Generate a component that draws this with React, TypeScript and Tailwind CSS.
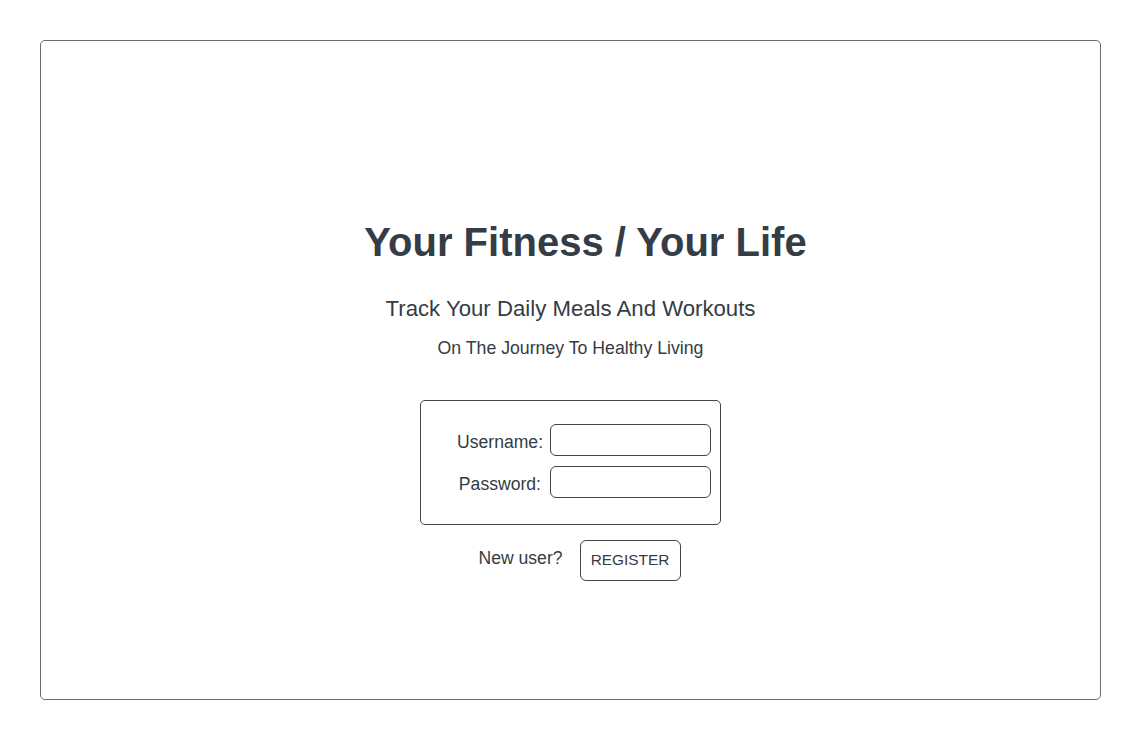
import { useState } from 'react';

function App() {
  const [username, setUsername] = useState('');
  const [password, setPassword] = useState('');

  return (
    <div className="min-h-screen bg-white p-10 font-['Liberation_Sans',Arial,sans-serif] text-[#343c45]">
      {/* Main frame */}
      <div className="h-[660px] w-[1061px] rounded-[5px] border border-[#6b6b6b] flex flex-col items-center pt-[181px]">
        <h1 className="ml-[30px] text-[40px] leading-none font-bold">Your Fitness / Your Life</h1>
        <h2 className="mt-[36px] text-[22.2px] leading-none">Track Your Daily Meals And Workouts</h2>
        <p className="mt-[20px] text-[17.7px] leading-none">On The Journey To Healthy Living</p>

        {/* Login box */}
        <form
          className="mt-[42px] w-[301px] h-[125px] rounded-[5px] border border-[#444] pt-[23px] pl-[36px] flex flex-col gap-[10px]"
          onSubmit={(e) => e.preventDefault()}
        >
          <div className="flex items-center">
            <label className="w-[93px] text-[17.6px] text-right pr-[7px] pt-[4px]">Username:</label>
            <input
              value={username}
              onChange={(e) => setUsername(e.target.value)}
              className="w-[161px] h-[32px] rounded-[6px] border border-[#444] px-2 outline-none"
            />
          </div>
          <div className="flex items-center">
            <label className="w-[93px] text-[17.6px] text-right pr-[9px] pt-[4px]">Password:</label>
            <input
              type="password"
              value={password}
              onChange={(e) => setPassword(e.target.value)}
              className="w-[161px] h-[32px] rounded-[6px] border border-[#444] px-2 outline-none"
            />
          </div>
        </form>

        {/* Register row */}
        <div className="mt-[15px] flex items-center ml-[18px]">
          <span className="text-[17.6px] mb-[4px]">New user?</span>
          <button className="ml-[17px] w-[101px] h-[41px] rounded-[6px] border border-[#444] text-[15.4px] text-[#343c45] pb-[2px]">
            REGISTER
          </button>
        </div>
      </div>
    </div>
  );
}

export default App;
